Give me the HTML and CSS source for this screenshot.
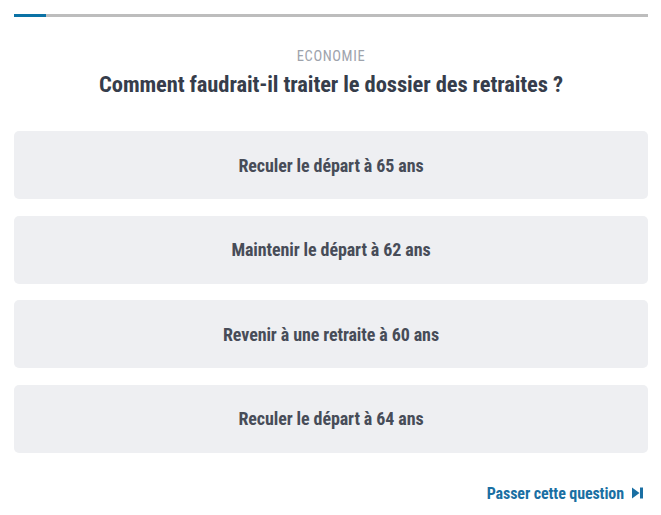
FILE: index.html
```html
<!DOCTYPE html>
<html lang="fr"><head><meta charset="utf-8"><link rel="stylesheet" href="styles.css"></head>
<body>
<div class="quiz">
  <div class="progress"><div class="progress-fill" style="width:5%"></div></div>
  <div class="head">
    <div class="category">ECONOMIE</div>
    <h1 class="question">Comment faudrait-il traiter le dossier des retraites ?</h1>
  </div>
  <div class="options">
    <button class="option">Reculer le départ à 65 ans</button>
    <button class="option">Maintenir le départ à 62 ans</button>
    <button class="option">Revenir à une retraite à 60 ans</button>
    <button class="option">Reculer le départ à 64 ans</button>
  </div>
  <div class="footer">
    <a class="skip" href="#">Passer cette question
      <svg class="skip-icon" viewBox="0 0 11 12" width="11" height="12"><path d="M0 0.5 L7.5 6 L0 11.5 Z" fill="currentColor"/><rect x="8" y="0.5" width="3" height="11" fill="currentColor"/></svg>
    </a>
  </div>
</div>
</body></html>
```
FILE: styles.css
```css
*{box-sizing:border-box}
body{margin:0;background:#fff;font-family:"Roboto Condensed","Liberation Sans",sans-serif}
.quiz{padding:14px 13px 0 14px}
.progress{height:3px;background:#bdbdbd}
.progress-fill{height:100%;background:#0b72a5}
.head{display:flex;flex-direction:column;align-items:center;padding-top:31px}
.category{font-size:14.5px;line-height:18px;letter-spacing:0.6px;color:#9ea3ac;font-weight:400}
.question{margin:4px 0 0;font-size:22.5px;line-height:28px;font-weight:700;color:#363d4b;letter-spacing:-0.1px}
.options{display:flex;flex-direction:column;gap:16.5px;margin-top:33px}
.option{display:flex;align-items:center;justify-content:center;height:68px;border:0;border-radius:5px;background:#eeeff2;font-family:inherit;font-size:18px;font-weight:700;color:#474c58;letter-spacing:-0.1px;padding:0}
.footer{display:flex;justify-content:flex-end;margin-top:31px;padding-right:5px}
.skip{display:flex;align-items:center;gap:8px;font-size:16px;font-weight:700;color:#1a6fa3;text-decoration:none;letter-spacing:-0.1px}
.skip-icon{display:block}
```
